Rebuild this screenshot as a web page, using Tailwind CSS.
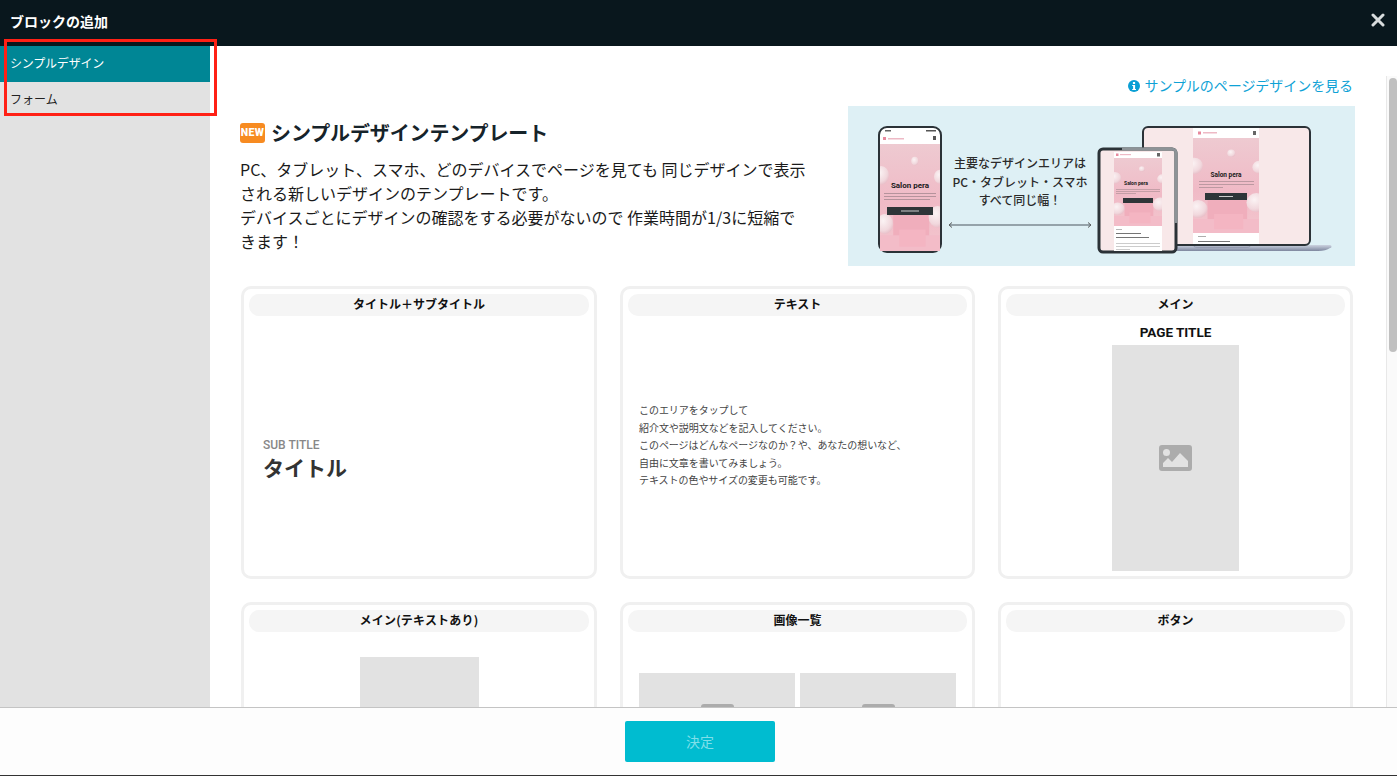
<!DOCTYPE html>
<html lang="ja">
<head>
<meta charset="utf-8">
<script src="https://cdn.jsdelivr.net/npm/@tailwindcss/browser@4"></script>
</head>
<body class="m-0 overflow-hidden bg-white font-['Noto_Sans_CJK_JP','Noto_Sans',sans-serif] text-[#111]">
<div class="relative flex h-[776px] w-[1397px] flex-col overflow-hidden">
  <header class="flex h-[46px] shrink-0 items-center justify-between bg-[#09171d] pl-[10px] pr-[12px]">
    <h1 class="mb-[4px] text-[14px] leading-none font-bold text-white">ブロックの追加</h1>
    <svg class="mb-[6px] h-[14px] w-[14px]" viewBox="0 0 14 14"><path d="M2 2l10 10M12 2L2 12" stroke="#d8dcdd" stroke-width="3" stroke-linecap="round"/></svg>
  </header>

  <div class="flex min-h-0 flex-1">
    <aside class="w-[210px] shrink-0 bg-[#e2e2e2] text-[12px]">
      <div class="flex h-[36px] items-center bg-[#008695] pb-[2px] pl-[10px] tracking-[-0.2px] text-white">シンプルデザイン</div>
      <div class="flex h-[34px] items-center pl-[10px] text-[#222]">フォーム</div>
    </aside>

    <main class="min-w-0 flex-1 overflow-hidden pl-[30px]">
      <div class="flex h-[60px] w-[1113px] items-center justify-end gap-[4px] pt-[19px] text-[14px] tracking-[-0.05px] text-[#0ea2d6]">
        <svg class="h-[12px] w-[12px]" viewBox="0 0 12 12"><circle cx="6" cy="6" r="6" fill="#0a9fd4"/><rect x="4.9" y="2" width="2.2" height="2" fill="#fff"/><path d="M4.2 5h2.9v3.9H8V10H4.2V8.9h.9V6.1h-.9z" fill="#fff"/></svg>
        <span>サンプルのページデザインを見る</span>
      </div>

      <section class="flex w-[1115px] justify-between">
        <div class="w-[570px]">
          <div class="mt-[11px] flex items-center gap-[6px]">
            <span class="flex h-[20px] w-[25px] items-center justify-center rounded-[3px] bg-[#f78b21] font-['Roboto',sans-serif] text-[10.5px] font-black tracking-[0.3px] text-white">NEW</span>
            <h2 class="text-[20px] leading-[32px] font-bold tracking-[-0.12px] text-[#16232a]">シンプルデザインテンプレート</h2>
          </div>
          <p class="mt-[8px] text-[16px] leading-[24px] text-[#1a1a1a]">PC、タブレット、スマホ、どのデバイスでページを見ても 同じデザインで表示される新しいデザインのテンプレートです。<br>デバイスごとにデザインの確認をする必要がないので 作業時間が1/3に短縮できます！</p>
        </div>

        <svg class="h-[160px] w-[507px] shrink-0" viewBox="0 0 507 160">
          <defs>
            <linearGradient id="pk" x1="0" y1="0" x2="0" y2="1"><stop offset="0" stop-color="#eecad1"/><stop offset=".55" stop-color="#f0bac6"/><stop offset="1" stop-color="#f3c6ce"/></linearGradient>
            <linearGradient id="base" x1="0" y1="0" x2="0" y2="1"><stop offset="0" stop-color="#ccd3e0"/><stop offset="1" stop-color="#7d869e"/></linearGradient>
            <radialGradient id="bub" cx=".4" cy=".35" r=".7"><stop offset="0" stop-color="#fbf3f4"/><stop offset=".7" stop-color="#f1d8dd"/><stop offset="1" stop-color="#e7bcc6"/></radialGradient>
            <filter id="soft" x="-5%" y="-5%" width="110%" height="110%"><feGaussianBlur stdDeviation=".35"/></filter>
            <symbol id="scene" viewBox="0 0 100 150" preserveAspectRatio="none">
              <rect width="100" height="150" fill="url(#pk)"/>
              <rect x="22" y="98" width="60" height="34" fill="#f0aebc"/>
              <rect x="0" y="128" width="100" height="22" fill="#f3bcc8"/>
              <rect x="32" y="120" width="44" height="24" fill="#f4b5c2"/>
              <circle cx="58" cy="24" r="6" fill="url(#bub)"/>
              <circle cx="2" cy="44" r="13" fill="url(#bub)"/>
              <circle cx="8" cy="112" r="14" fill="url(#bub)"/>
              <circle cx="96" cy="102" r="15" fill="url(#bub)"/>
              <circle cx="100" cy="46" r="10" fill="url(#bub)"/>
            </symbol>
          </defs>
          <rect width="507" height="160" fill="#def0f5"/>

          <!-- phone -->
          <rect x="31" y="21" width="62" height="125" rx="8" fill="#fff" stroke="#2b3237" stroke-width="2"/>
          <svg x="32" y="38" width="60" height="107"><use href="#scene" width="60" height="107"/></svg>
          <g filter="url(#soft)">
            <rect x="37" y="24" width="6" height="1.500" fill="#666"/><rect x="78" y="24" width="10" height="1.500" fill="#555"/>
            <rect x="35" y="31" width="3" height="3" fill="#e8899e"/><rect x="40" y="32" width="16" height="1.500" fill="#eeb9c5"/><rect x="85" y="30" width="3" height="4" fill="#555"/>
            <g fill="#a78a91"><rect x="36" y="87" width="52" height=".8"/><rect x="36" y="90" width="52" height=".8"/><rect x="36" y="93" width="46" height=".8"/></g>
            <rect x="39" y="101" width="46" height="8" fill="#2f3539"/><rect x="53" y="104.500" width="18" height="1" fill="#ccc"/>
          </g>
          <text x="62" y="82" text-anchor="middle" font-family="Roboto" font-weight="700" font-size="8" fill="#1a1a1a">Salon pera</text>

          <!-- centre caption -->
          <g font-family="Noto Sans CJK JP" font-size="12" font-weight="500" fill="#2b2b2b" text-anchor="middle">
            <text x="172" y="62">主要なデザインエリアは</text>
            <text x="172" y="81">PC・タブレット・スマホ</text>
            <text x="172" y="99">すべて同じ幅！</text>
          </g>
          <path d="M102 119h140" stroke="#7c8a90" stroke-width="1.500"/>
          <path d="M104 116.500l-3 2.500 3 2.500M240 116.500l3 2.500-3 2.500" fill="none" stroke="#333" stroke-width=".8"/>

          <!-- laptop -->
          <path d="M310 139H482a1 1 0 0 1 0 3q-4 3-12 3H310z" fill="url(#base)"/>
          <path d="M346 139h56v1.500q-1 1-3 1h-50q-2 0-3-1z" fill="#aeb5c6" stroke="#717a90" stroke-width=".4"/>
          <rect x="295" y="21" width="167" height="118" rx="5" fill="#f8e8e9" stroke="#2b3237" stroke-width="2"/>
          <rect x="345" y="22" width="66" height="116" fill="#fff"/>
          <svg x="345" y="32" width="66" height="95"><use href="#scene" width="66" height="95"/></svg>
          <g filter="url(#soft)">
            <rect x="350" y="25.500" width="3" height="3" fill="#e8899e"/><rect x="355" y="26" width="14" height="1.500" fill="#eeb9c5"/><rect x="405" y="25" width="3" height="4" fill="#666"/>
            <g fill="#a78a91"><rect x="351" y="75" width="55" height=".7"/><rect x="351" y="78" width="55" height=".7"/><rect x="351" y="81" width="24" height=".7"/></g>
            <rect x="357" y="87" width="42" height="7" fill="#2f3539"/><rect x="371" y="90" width="14" height="1" fill="#ccc"/>
            <rect x="350" y="130" width="8" height=".8" fill="#999"/><rect x="350" y="135" width="32" height="1" fill="#777"/>
          </g>
          <text x="378" y="71" text-anchor="middle" font-family="Roboto" font-weight="700" font-size="6.500" fill="#1a1a1a">Salon pera</text>

          <!-- tablet -->
          <rect x="251" y="43" width="77" height="103" rx="4" fill="#f8e8e9" stroke="#2b3237" stroke-width="3"/>
          <path d="M274 43h50a4 4 0 0 1 4 4v70" fill="none" stroke="#8d9397" stroke-width="3"/>
          <rect x="266" y="46" width="48" height="99" fill="#fff"/>
          <svg x="266" y="52" width="48" height="68"><use href="#scene" width="48" height="68"/></svg>
          <g filter="url(#soft)">
            <rect x="268" y="47.500" width="2.500" height="2.500" fill="#e8899e"/><rect x="272" y="48" width="11" height="1.200" fill="#eeb9c5"/><rect x="309" y="47" width="3" height="3.500" fill="#666"/>
            <g fill="#a78a91"><rect x="268" y="83" width="44" height=".6"/><rect x="268" y="85" width="44" height=".6"/><rect x="268" y="87" width="20" height=".6"/></g>
            <rect x="275" y="92" width="30" height="5" fill="#2f3539"/>
            <rect x="268" y="123" width="6" height=".7" fill="#999"/>
            <g fill="#666"><rect x="268" y="127" width="25" height=".9"/><rect x="268" y="131" width="33" height=".9"/></g>
            <g fill="#aaa"><rect x="268" y="137" width="44" height=".6"/><rect x="268" y="140" width="44" height=".6"/><rect x="268" y="143" width="14" height=".6"/></g>
          </g>
          <text x="288" y="79" text-anchor="middle" font-family="Roboto" font-weight="700" font-size="5" fill="#1a1a1a">Salon pera</text>
        </svg>
      </section>

      <div class="mt-[20px] ml-[1px] grid w-[1112px] grid-cols-[356px_355px_355px] grid-rows-[293px_293px] gap-x-[23px] gap-y-[23px]">
        <article class="flex flex-col rounded-[10px] border-[3px] border-[#f0f0f0] px-[5px] pt-[5px]">
          <h3 class="flex h-[22px] shrink-0 items-center justify-center rounded-[10px] bg-[#f5f5f5] pb-[2px] text-[12px] font-bold">タイトル＋サブタイトル</h3>
          <div class="flex flex-1 flex-col justify-center pl-[14px] pt-[28px]">
            <p class="font-['Roboto',sans-serif] text-[12px] leading-[14px] font-medium text-[#888]">SUB TITLE</p>
            <p class="text-[21px] leading-[30px] font-bold text-[#333]">タイトル</p>
          </div>
        </article>

        <article class="flex flex-col rounded-[10px] border-[3px] border-[#f0f0f0] px-[5px] pt-[5px]">
          <h3 class="flex h-[22px] shrink-0 items-center justify-center rounded-[10px] bg-[#f5f5f5] pb-[2px] text-[12px] font-bold">テキスト</h3>
          <div class="flex flex-1 flex-col justify-center pb-[2px] pl-[11px] text-[10px] leading-[17.5px] tracking-[-0.05px] text-[#444]">
            <p>このエリアをタップして<br>紹介文や説明文などを記入してください。<br>このページはどんなページなのか？や、あなたの想いなど、<br>自由に文章を書いてみましょう。<br>テキストの色やサイズの変更も可能です。</p>
          </div>
        </article>

        <article class="flex flex-col items-stretch rounded-[10px] border-[3px] border-[#f0f0f0] px-[5px] pt-[5px]">
          <h3 class="flex h-[22px] shrink-0 items-center justify-center rounded-[10px] bg-[#f5f5f5] pb-[2px] text-[12px] font-bold">メイン</h3>
          <p class="mt-[7px] text-center font-['Roboto',sans-serif] text-[13.500px] leading-[18px] font-bold">PAGE TITLE</p>
          <div class="mx-auto mt-[4px] flex h-[226px] w-[127px] items-center justify-center bg-[#e2e2e2]">
            <svg class="h-[26px] w-[33px]" viewBox="0 0 33 26"><path fill="#acacac" fill-rule="evenodd" d="M3 0h27a3 3 0 0 1 3 3v20a3 3 0 0 1-3 3H3a3 3 0 0 1-3-3V3a3 3 0 0 1 3-3zm4.500 4a3.500 3.500 0 1 0 0 7 3.500 3.500 0 0 0 0-7zM21 8l-8 9-4-4-5 5v4h25v-6z"/></svg>
          </div>
        </article>

        <article class="flex flex-col rounded-[10px] border-[3px] border-[#f0f0f0] px-[5px] pt-[5px]">
          <h3 class="flex h-[22px] shrink-0 items-center justify-center rounded-[10px] bg-[#f5f5f5] pb-[2px] text-[12px] font-bold tracking-[0.2px]">メイン(テキストあり)</h3>
          <div class="mx-auto mt-[25px] h-[120px] w-[119px] bg-[#e2e2e2]"></div>
        </article>

        <article class="flex flex-col rounded-[10px] border-[3px] border-[#f0f0f0] px-[5px] pt-[5px]">
          <h3 class="flex h-[22px] shrink-0 items-center justify-center rounded-[10px] bg-[#f5f5f5] pb-[2px] text-[12px] font-bold">画像一覧</h3>
          <div class="mt-[41px] flex gap-[5px] pl-[11px]">
            <div class="flex h-[120px] w-[156px] justify-center bg-[#e2e2e2] pt-[31px]"><div class="h-[26px] w-[33px] rounded-[3px] bg-[#acacac]"></div></div>
            <div class="flex h-[120px] w-[156px] justify-center bg-[#e2e2e2] pt-[31px]"><div class="h-[26px] w-[33px] rounded-[3px] bg-[#acacac]"></div></div>
          </div>
        </article>

        <article class="flex flex-col rounded-[10px] border-[3px] border-[#f0f0f0] px-[5px] pt-[5px]">
          <h3 class="flex h-[22px] shrink-0 items-center justify-center rounded-[10px] bg-[#f5f5f5] pb-[2px] text-[12px] font-bold">ボタン</h3>
        </article>
      </div>
    </main>

    <div class="mt-[30px] w-[11px] shrink-0 border-l border-[#e8e8e8] bg-[#fafafa] pl-[2px] pt-[2px]">
      <div class="h-[274px] w-[8px] rounded-[4px] bg-[#c0c0c0]"></div>
    </div>
  </div>

  <footer class="flex h-[69px] shrink-0 items-start justify-center border-t border-b border-t-[#c4c4c4] border-b-[#333] bg-[#fdfdfd] pl-[3px] pt-[13px]">
    <button class="h-[41px] w-[150px] rounded-[2px] bg-[#00bcd0] text-[14px] text-[#7fdfe9]">決定</button>
  </footer>

  <div class="pointer-events-none absolute left-[4px] top-[39px] h-[77px] w-[213px] border-[3px] border-[#ff2015]"></div>
</div>
</body>
</html>
